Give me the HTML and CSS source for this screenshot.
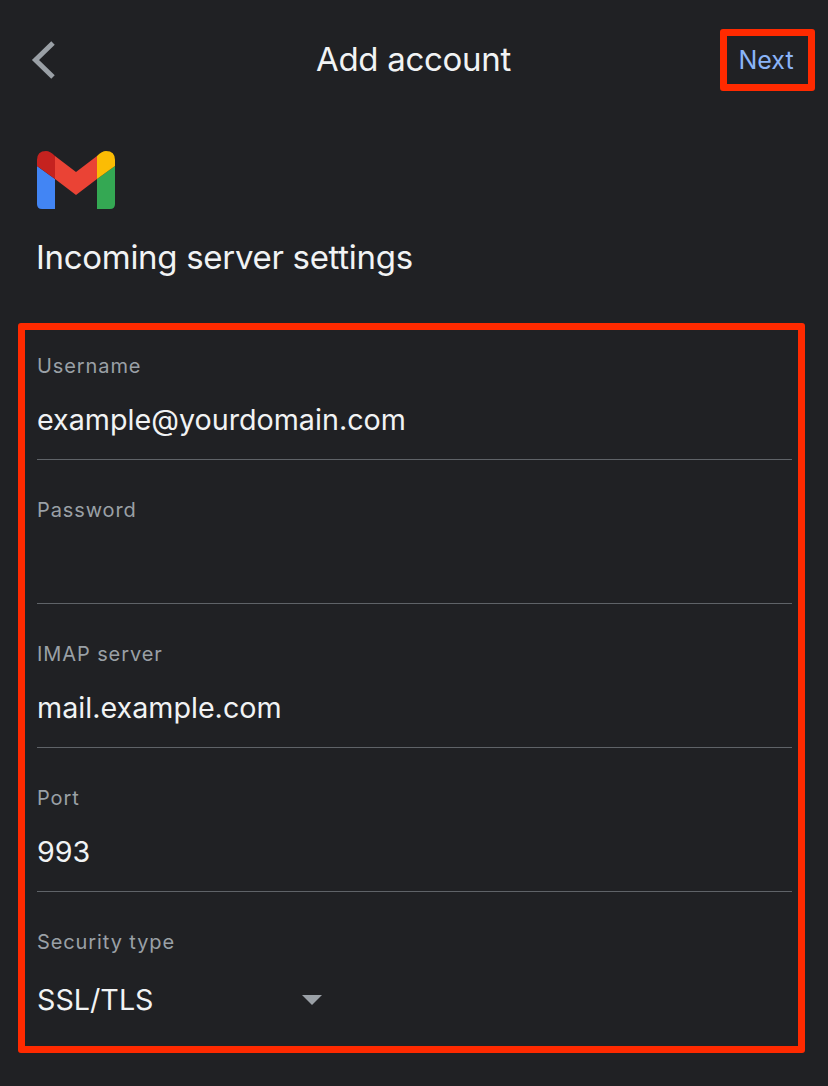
FILE: index.html
```html
<!DOCTYPE html>
<html lang="en">
<head>
<meta charset="utf-8">
<title>Add account</title>
<link rel="stylesheet" href="styles.css">
</head>
<body>
<header class="topbar">
  <svg class="back" viewBox="0 0 24 40" width="24" height="40" aria-hidden="true"><path d="M22 3 L4.500 20 L22 37" fill="none" stroke="#9aa0a6" stroke-width="5"/></svg>
  <h1 class="title">Add account</h1>
  <div class="next">Next</div>
</header>
<svg class="logo" viewBox="0 0 78 58" width="78" height="58" aria-hidden="true">
  <path d="M0 15 L18 28 V58 H5 Q0 58 0 53 Z" fill="#4285f4"/>
  <path d="M60 28 L78 15 V53 Q78 58 73 58 H60 Z" fill="#34a853"/>
  <path d="M18 5 L39 21 L60 5 V28 L39 44 L18 28 Z" fill="#ea4335"/>
  <path d="M0 15 V9 Q0 0 9 0 Q13 0 18 5 V28 Z" fill="#c5221f"/>
  <path d="M78 15 V9 Q78 0 69 0 Q65 0 60 5 V28 Z" fill="#fbbc04"/>
</svg>
<h2 class="heading">Incoming server settings</h2>
<section class="form">
  <div class="row"><div class="label">Username</div><div class="value">example@yourdomain.com</div></div>
  <div class="row"><div class="label">Password</div><div class="value"></div></div>
  <div class="row"><div class="label">IMAP server</div><div class="value">mail.example.com</div></div>
  <div class="row"><div class="label">Port</div><div class="value">993</div></div>
  <div class="row row-select"><div class="label">Security type</div><div class="select"><span class="value">SSL/TLS</span><span class="arrow"></span></div></div>
</section>
</body>
</html>
```
FILE: styles.css
```css
* { box-sizing: border-box; }
html, body { margin: 0; padding: 0; }
body {
  width: 828px;
  height: 1086px;
  overflow: hidden;
  background: #202124;
  color: #f1f3f4;
  font-family: Inter, "Liberation Sans", sans-serif;
}
.topbar {
  display: grid;
  grid-template-columns: 1fr auto 1fr;
  align-items: center;
  height: 62px;
  margin: 29px 13px 0 32px;
}
.back { display: block; margin-left: -1px; }
.title {
  margin: 0 0 2px -20px;
  font-size: 33px;
  font-weight: 400;
  line-height: 60px;
  letter-spacing: -0.3px;
}
.next {
  justify-self: end;
  width: 95px;
  height: 62px;
  border: 7px solid #ff2a00;
  border-radius: 3px;
  padding-right: 3px;
  color: #8ab4f8;
  font-size: 25px;
  line-height: 48px;
  text-align: center;
}
.logo { display: block; margin: 60px 0 0 37px; }
.heading {
  margin: 27px 0 0 36px;
  font-size: 33px;
  font-weight: 400;
  line-height: 42px;
  letter-spacing: -0.3px;
}
.form {
  width: 787px;
  height: 730px;
  margin: 45px 0 0 18px;
  padding: 0 6px 0 12px;
  border: 7px solid #ff2a00;
  border-radius: 3px;
}
.row {
  height: 130px;
  padding-top: 24px;
  border-bottom: 1px solid #5f6368;
}
.row + .row { margin-top: 14px; }
.row-select { border-bottom: 0; }
.label {
  height: 24px;
  color: #9aa0a6;
  font-size: 20px;
  line-height: 24px;
  letter-spacing: 0.9px;
}
.value {
  display: block;
  height: 40px;
  margin-top: 22px;
  font-size: 28.7px;
  line-height: 40px;
}
.select {
  display: flex;
  align-items: center;
  margin-top: 26px;
  height: 40px;
}
.select .value { margin-top: 0; width: 265px; }
.arrow {
  width: 0;
  height: 0;
  border-left: 10px solid transparent;
  border-right: 10px solid transparent;
  border-top: 10px solid #9aa0a6;
}
```
